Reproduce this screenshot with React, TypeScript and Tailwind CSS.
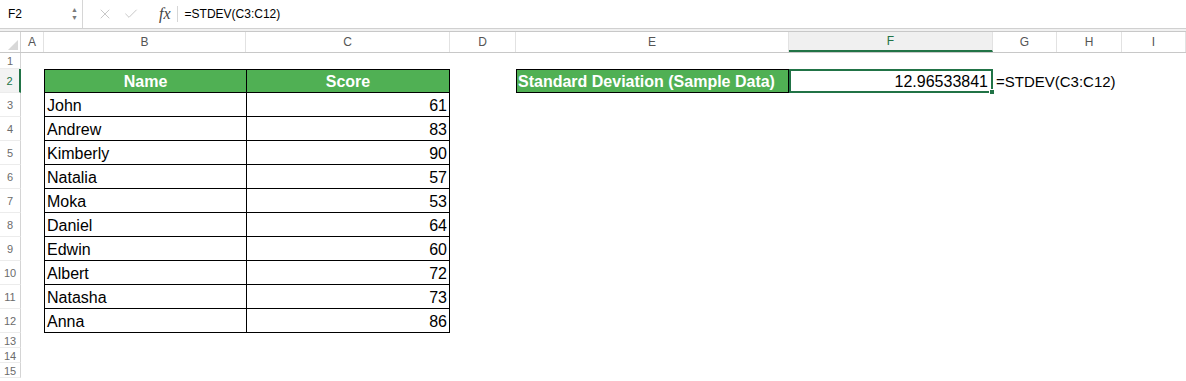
import { X, Check } from "lucide-react";

const cols = ["A", "B", "C", "D", "E", "F", "G", "H", "I"];

const data: [string, number][] = [
  ["John", 61],
  ["Andrew", 83],
  ["Kimberly", 90],
  ["Natalia", 57],
  ["Moka", 53],
  ["Daniel", 64],
  ["Edwin", 60],
  ["Albert", 72],
  ["Natasha", 73],
  ["Anna", 86],
];

const grid =
  "grid grid-cols-[21px_23px_202px_204px_66px_273px_204px_64px_65px_1fr]";

const RowHead = ({ n, active }: { n: number; active?: boolean }) => (
  <div
    className={
      "flex items-center justify-center text-[11px] pt-[2px] border-b border-[#ececec] " +
      (active
        ? "text-[#217346] border-r-2 border-r-[#217346] bg-[#f3f3f3]"
        : "text-[#6b6b6b] border-r border-r-[#d4d4d4]")
    }
  >
    {n}
  </div>
);

const Empty = () => <div />;

const App = () => {
  return (
    <div className="w-[1186px] h-[381px] overflow-hidden bg-white font-['Liberation_Sans',sans-serif] text-black">
      {/* formula bar */}
      <div className="h-[29px] flex items-center border-b border-[#d0d0d0] text-[12px]">
        <div className="w-[83px] h-full flex items-center justify-between pl-2 pr-[4px] border-r border-[#d6d6d6]">
          <span>F2</span>
          <div className="flex flex-col items-center text-[#7a7a7a] text-[7px] leading-[8px]">
            <span>▲</span>
            <span>▼</span>
          </div>
        </div>
        <div className="flex items-center gap-[10px] pl-[14px] text-[#c4c4c4]">
          <X size={16} strokeWidth={1.4} />
          <Check size={16} strokeWidth={1.4} />
        </div>
        <span className="ml-[20px] text-[#444] text-[16px] italic font-['Liberation_Serif',serif]">fx</span>
        <div className="ml-[6px] w-px h-[16px] bg-[#d6d6d6]" />
        <span className="ml-[7px]">=STDEV(C3:C12)</span>
      </div>
      <div className="h-[3px] bg-[#f1f1f1] border-b border-[#c8c8c8]" />

      {/* column headers */}
      <div className={grid + " h-[21px] text-[12px] text-[#555] border-b border-[#c8c8c8]"}>
        <div className="border-r border-[#d4d4d4] flex items-end justify-end pr-[2px] pb-[2px]">
          <div className="w-0 h-0 border-l-[10px] border-l-transparent border-b-[10px] border-b-[#d8d8d8]" />
        </div>
        {cols.map((c) => (
          <div
            key={c}
            className={
              "flex items-center justify-center border-r border-[#e2e2e2] " +
              (c === "F" ? "bg-[#f0f0f0] border-b-2 border-b-[#217346] text-[#217346]" : "")
            }
          >
            {c}
          </div>
        ))}
      </div>

      {/* sheet */}
      <div className={grid + " grid-rows-[16px_repeat(11,24px)_15px_15px_15px] text-[16px]"}>
        {/* row 1 */}
        <RowHead n={1} />
        {cols.map((c) => (
          <Empty key={c} />
        ))}

        {/* row 2 */}
        <RowHead n={2} active />
        <Empty />
        <div className="bg-[#50b054] border border-black border-r-0 flex items-center justify-center pt-[2px] text-white font-bold">
          Name
        </div>
        <div className="bg-[#50b054] border border-black flex items-center justify-center pt-[2px] text-white font-bold">
          Score
        </div>
        <Empty />
        <div className="bg-[#50b054] border border-black flex items-center pl-[1px] pt-[2px] text-white font-bold whitespace-nowrap">
          Standard Deviation (Sample Data)
        </div>
        <div className="relative border-2 border-[#217346] flex items-center justify-end pr-[3px] pt-[2px]">
          12.96533841
          <div className="absolute -right-[4px] -bottom-[4px] w-[6px] h-[6px] bg-[#217346] border border-white" />
        </div>
        <div className="flex items-center pl-[3px] pt-[2px] text-[15px] whitespace-nowrap overflow-visible">
          =STDEV(C3:C12)
        </div>
        <Empty />
        <Empty />

        {data.map(([name, score], i) => (
          <div key={name} className="contents">
            <RowHead n={i + 3} />
            <Empty />
            <div className="border-l border-b border-black flex items-center pl-[2px] pt-[2px]">{name}</div>
            <div className="border-l border-r border-b border-black flex items-center justify-end pr-[2px] pt-[2px]">
              {score}
            </div>
            <Empty />
            <Empty />
            <Empty />
            <Empty />
            <Empty />
            <Empty />
          </div>
        ))}

        {[13, 14, 15].map((n) => (
          <div key={n} className="contents">
            <RowHead n={n} />
            {cols.map((c) => (
              <Empty key={c} />
            ))}
          </div>
        ))}
      </div>
    </div>
  );
};

export default App;
